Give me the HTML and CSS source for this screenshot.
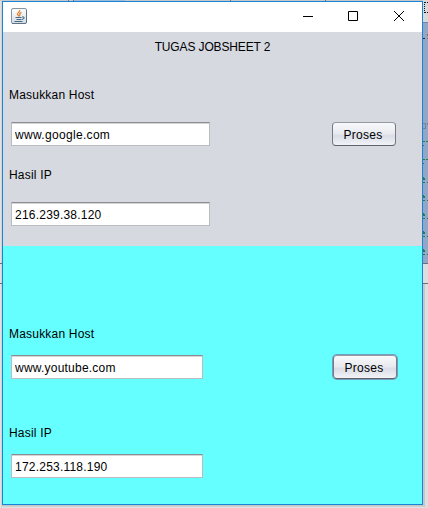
FILE: index.html
```html
<!DOCTYPE html>
<html lang="id">
<head>
<meta charset="utf-8">
<title>Jobsheet 2</title>
<link rel="stylesheet" href="styles.css">
</head>
<body>
<div class="desktop">
  <svg class="backdrop" width="428" height="508" viewBox="0 0 428 508" shape-rendering="crispEdges" aria-hidden="true">
    <path fill="#c6c8ca" d="M0 0h428v1H0z"/>
    <path fill="#9cbcd8" d="M74 0h51v1H74z"/>
    <path fill="#707276" d="M68 0h1v1h-1zM73 0h1v1h-1zM230 0h1v1h-1zM325 0h1v1h-1z"/>
    <path fill="#d4d4d4" d="M1 0h1v508H1z"/>
    <path fill="#d9d9d9" d="M423 0h5v22h-5z"/>
    <path fill="none" stroke="#111" stroke-dasharray="1 1" d="M424.500 2v11M425 2.500h3M425 12.500h3"/>
    <path fill="#92a6c6" d="M423 22h5v241h-5z"/>
    <path fill="#7188ad" d="M423 22h5v1h-5z"/>
    <path fill="#20205c" d="M423 38h2v1h-2z"/>
    <path fill="#a36930" d="M427 34h1v2h-1zM427 38h1v1h-1z"/>
    <path fill="none" stroke="#75849b" d="M423 123.500h2v5h-2M427 123v2"/>
    <g fill="#1d8047">
      <path d="M423 141h2v1h-2zM426 141h2v1h-2zM423 145h1v1h-1z"/>
      <path d="M423 159h2v1h-2zM426 159h2v1h-2zM423 163h1v1h-1z"/>
      <path d="M423 177h1v1h1v2h-2zM423 182h2v1h-2zM427 182h1v1h-1z"/>
      <path d="M423 195h1v1h1v2h-2zM423 200h2v1h-2zM427 200h1v1h-1z"/>
      <path d="M423 213h1v1h1v2h-2zM423 218h2v1h-2zM427 218h1v1h-1z"/>
      <path d="M423 231h1v1h1v2h-2zM423 236h2v1h-2zM427 236h1v1h-1z"/>
      <path d="M423 249h1v1h1v2h-2zM423 254h2v1h-2zM427 254h1v1h-1z"/>
    </g>
    <path fill="#dedede" d="M423 263h5v245h-5z"/>
    <path fill="#c7c7c7" d="M423 284h2v221h-2zM2 505h423v1H2z"/>
    <path fill="#d0d0d0" d="M2 506h424v1H2z"/>
    <path fill="#707070" d="M423 263h5v1h-5zM423 283h5v1h-5zM0 263h2v1H0zM0 283h2v1H0z"/>
  </svg>
  <main class="window">
    <header class="titlebar">
      <svg class="java" width="16" height="16" viewBox="0 0 16 16" aria-hidden="true">
        <defs><linearGradient id="tile" x2="0" y2="1"><stop stop-color="#fff"/><stop offset="1" stop-color="#d0dce5"/></linearGradient></defs>
        <rect x=".5" y=".5" width="15" height="15" rx="1.500" fill="url(#tile)" stroke="#8494a1"/>
        <path d="M1 15.500h14M15.500 2v13" stroke="#5e7385" fill="none"/>
        <path d="M8.700 2C9.500 4 5.800 4.700 6.500 6.500L7.800 8M10.500 4.300C8 5.300 8.500 6 9 7L8 8.500" stroke="#e7822f" stroke-width="1.300" fill="none"/>
        <path d="M4.500 9.500h6M5.500 11.500h5M3.500 13.500h8M11 9h2v1.500l-2 1" stroke="#47687f" fill="none"/>
      </svg>
      <div class="controls">
        <svg width="10" height="10" viewBox="0 0 10 10" role="img" aria-label="Minimize"><path d="M0 5.500h10"/></svg>
        <svg width="10" height="10" viewBox="0 0 10 10" role="img" aria-label="Maximize"><path d="M.5.5h9v9h-9z"/></svg>
        <svg class="close" width="10" height="10" viewBox="0 0 10 10" role="img" aria-label="Close"><path d="M0 0l10 10M10 0L0 10"/></svg>
      </div>
    </header>
    <section class="panel panel-top">
      <h1 class="title">TUGAS JOBSHEET 2</h1>
      <label class="label" for="host1">Masukkan Host</label>
      <div class="row">
        <input class="field field-host" id="host1" value="www.google.com">
        <button class="button">Proses</button>
      </div>
      <label class="label" for="ip1">Hasil IP</label>
      <input class="field" id="ip1" value="216.239.38.120">
    </section>
    <section class="panel panel-bottom">
      <label class="label" for="host2">Masukkan Host</label>
      <div class="row">
        <input class="field" id="host2" value="www.youtube.com">
        <button class="button button-focused">Proses</button>
      </div>
      <label class="label" for="ip2">Hasil IP</label>
      <input class="field" id="ip2" value="172.253.118.190">
    </section>
  </main>
</div>
</body>
</html>
```
FILE: styles.css
```css
* { box-sizing: border-box; }

body {
  margin: 0;
  overflow: hidden;
  background: #e2e2e2;
  color: #000;
  font: 12px/16px "Liberation Sans", Arial, sans-serif;
}

.desktop {
  position: relative;
  width: 428px;
  height: 508px;
  padding: 1px 0 0 2px;
}

.backdrop {
  position: absolute;
  inset: 0;
}

.window {
  position: relative;
  display: flex;
  flex-direction: column;
  width: 421px;
  height: 504px;
  border: 1px solid #1883d7;
}

.titlebar {
  display: flex;
  justify-content: space-between;
  height: 30px;
  padding: 6px 18px 0 8px;
  background: #fff;
}

.controls {
  display: flex;
  gap: 35px;
  padding-top: 3px;
}

.controls svg {
  fill: none;
  stroke: #000;
}

.controls .close { margin-left: 1px; }

.panel {
  display: flex;
  flex-direction: column;
  align-items: flex-start;
}

.panel-top {
  height: 214px;
  padding-top: 7px;
  background: #d6d9e0;
}

.panel-bottom {
  flex: 1;
  padding-top: 80px;
  background: #66ffff;
}

.title {
  align-self: center;
  margin: 0 0 32px;
  font-size: 12px;
  font-weight: 400;
  letter-spacing: -0.13px;
}

.label {
  padding-left: 6px;
  letter-spacing: 0.2px;
}

.row {
  display: flex;
  justify-content: space-between;
  align-self: stretch;
  margin: 19px 26px 21px 0;
}

.field {
  width: 199px;
  height: 24px;
  margin: 0 0 0 8px;
  padding: 1px 3px 0;
  border: 1px solid #babcbf;
  border-top-color: #8c8d90;
  border-radius: 0;
  outline: 0;
  background: #fff;
  box-shadow: inset 0 1px #d5d5d7;
  color: #000;
  font: inherit;
  letter-spacing: 0.22px;
}

.field-host { letter-spacing: 0.32px; }

.panel-top > .field { margin-top: 19px; }

.button {
  width: 64px;
  height: 24px;
  margin: 0;
  padding: 1px 2px 0 0;
  border: 1px solid #777a80;
  border-top-color: #9699a0;
  border-bottom-color: #5f6268;
  border-radius: 4px;
  background: linear-gradient(#f8f9fb, #e8eaef 48%, #dadde5 58%, #f1f3f7);
  color: #000;
  font: inherit;
  letter-spacing: 0.3px;
}

.panel-bottom .row {
  align-items: center;
  margin: 12px 24px 45px 0;
}

.panel-bottom .field { width: 192px; }

.panel-bottom > .field { margin-top: 13px; }

.button-focused {
  margin: 1px;
  box-shadow: 0 0 0 1px #739bc3;
}
```
